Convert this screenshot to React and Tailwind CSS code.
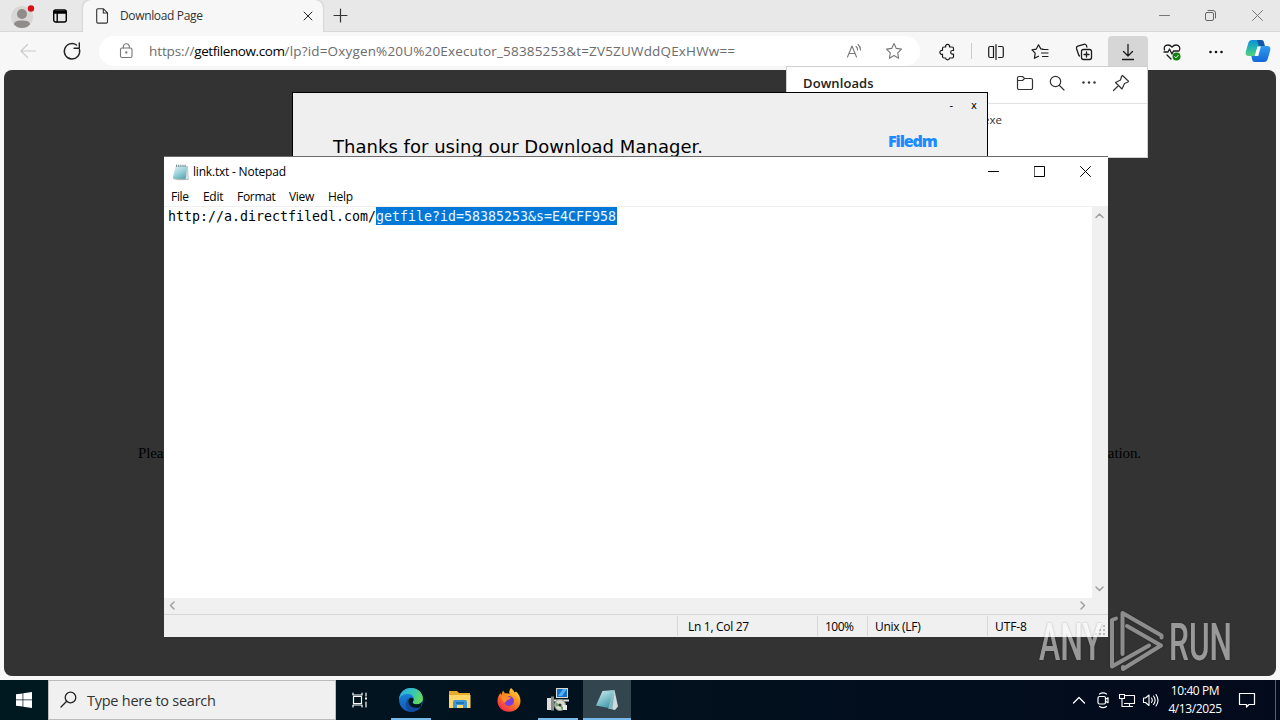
import React from "react";

const UI = "font-['Open_Sans','Noto_Sans',sans-serif]";

const Icon = ({ size = 20, stroke = "#1b1b1b", width = 1.2, className = "", children }) => (
  <svg
    width={size}
    height={size}
    viewBox={`0 0 ${size} ${size}`}
    fill="none"
    stroke={stroke}
    strokeWidth={width}
    strokeLinecap="round"
    strokeLinejoin="round"
    className={`shrink-0 ${className}`}
  >
    {children}
  </svg>
);

const NotepadIcon = ({ size }) => (
  <svg width={size} height={size} viewBox="0 0 24 24" className="shrink-0">
    <defs>
      <linearGradient id="np" x1="0" y1="0" x2="0.6" y2="1">
        <stop offset="0" stopColor="#e3f4f6" />
        <stop offset="0.5" stopColor="#a5d6de" />
        <stop offset="1" stopColor="#5fadb9" />
      </linearGradient>
    </defs>
    <path d="M6 3 L22.500 3 L23.500 22.500 L10 23 L2 21.500 Z" fill="#b5b8b4" />
    <path d="M5 3 L21.500 3 L19.500 21.500 L1 20.500 Z" fill="url(#np)" />
    <path d="M21.500 3 L22.500 21 L19.500 21.500 Z" fill="#dfe5e5" />
    <path d="M6.500 1v3M9.500 1v3M12.500 1v3M15.500 1v3M18.500 1v3" stroke="#4a6468" strokeWidth="1.200" />
  </svg>
);

const TabStrip = () => (
  <div className="flex h-8 shrink-0 bg-[#e8e8e8]">
    <div className="flex w-[83px] items-center border-b border-[#d8d8d8] pl-[10px]">
      <svg width="26" height="28" viewBox="0 0 26 28">
        <circle cx="12" cy="15" r="11" fill="#d9d7d5" />
        <circle cx="12" cy="12" r="5" fill="#8f8c89" />
        <path d="M4 22.500C4 19 8 18.500 12 18.500s8 .5 8 4C18 25 15 26 12 26s-6-1-8-3.500z" fill="#8f8c89" />
        <circle cx="21" cy="6.500" r="3.200" fill="#d9101c" />
      </svg>
      <Icon size={16} stroke="#000" width={1.4} className="ml-4">
        <rect x="1.700" y="2" width="12.600" height="12" rx="2" />
        <path d="M2 3.500h12M2 5h12M5.200 5v9" />
      </Icon>
    </div>
    <div className="flex w-[240px] items-center rounded-t-lg bg-[#f7f7f7] pl-[11px] shadow-[0_0_2px_#aaa]">
      <Icon size={16} stroke="#333" width={1.1}>
        <path d="M4 .8h5.500l4 4v9a1.300 1.300 0 0 1-1.300 1.300H4a1.300 1.300 0 0 1-1.300-1.300v-11.700A1.300 1.300 0 0 1 4 .8zM9.300 1v4h4" />
      </Icon>
      <span className="ml-[10px] flex-1 text-[12px] tracking-[-0.35px] text-[#333]">Download Page</span>
      <Icon size={10} stroke="#222" width={1} className="mr-[10px]">
        <path d="M1 1l8 8M9 1l-8 8" />
      </Icon>
    </div>
    <div className="flex flex-1 items-center border-b border-[#d8d8d8] pl-[10px]">
      <Icon size={15} stroke="#333">
        <path d="M7.500 1v13M1 7.500h13" />
      </Icon>
      <div className="ml-auto flex items-center pr-[17px]">
        <Icon size={11} stroke="#777" width={1}>
          <path d="M.5 5.500h10" />
        </Icon>
        <Icon size={11} stroke="#666" width={1} className="mr-9 ml-[35px]">
          <rect x=".5" y="2.500" width="8" height="8" rx="1.500" />
          <path d="M3 .5h5a2.500 2.500 0 0 1 2.500 2.500v5" />
        </Icon>
        <Icon size={11} stroke="#777" width={1}>
          <path d="M.5.5l10 10M10.500.5l-10 10" />
        </Icon>
      </div>
    </div>
  </div>
);

const ToolButton = ({ active, children }) => (
  <div className={`flex h-[31px] w-10 shrink-0 items-center justify-center rounded-t ${active ? "bg-[#d6d6d6]" : ""}`}>
    {children}
  </div>
);

const Toolbar = () => (
  <div className="flex h-[38px] shrink-0 bg-[#f7f7f7] pt-1">
    <div className="flex h-[30px] w-[99px] items-center">
      <Icon size={18} stroke="#c9c9c9" className="ml-[19px]">
        <path d="M16.500 9H2M8.500 2.500L2 9l6.500 6.500" />
      </Icon>
      <Icon size={20} stroke="#222" width={1.400} className="ml-[25px]">
        <path d="M17.500 8.500A7.700 7.700 0 1 1 14.500 4M17.300 2v5.200h-5.200" />
      </Icon>
    </div>
    <div className="flex h-[30px] w-[821px] items-center rounded-full bg-white pl-[20px]">
      <Icon size={16} stroke="#777" width={1.100} className="-mt-px">
        <rect x="1.500" y="5" width="11.500" height="9.500" rx="1.500" />
        <path d="M4.300 5V3.800a3 3 0 0 1 6 0V5" />
        <circle cx="7.300" cy="9.500" r=".6" fill="#777" />
      </Icon>
      <div className="ml-[14px] flex-1 text-[13.5px] whitespace-nowrap text-[#6c6c6c]">
        <span className="tracking-[-0.1px]">https://</span>
        <span className="tracking-[-0.42px] text-black">getfilenow.com</span>
        <span className="tracking-[0.17px]">/lp?id=Oxygen%20U%20Executor_58385253&amp;t=ZV5ZUWddQExHWw==</span>
      </div>
      <Icon size={18} stroke="#777" width={1.100}>
        <path d="M2.500 15L7 4l4.500 11M4 11.500h6M11 4.500a4 4 0 0 1 1.500 3.500M13 2.500a7 7 0 0 1 2.500 5.500" />
      </Icon>
      <Icon size={18} stroke="#777" width={1.100} className="mr-[17px] ml-[22px]">
        <path d="M9 1.500l2.300 4.900 5.200.7-3.800 3.700.9 5.400L9 13.600l-4.600 2.600.9-5.400L1.500 7.100l5.200-.7z" />
      </Icon>
    </div>
    <div className="ml-[7px] flex gap-1">
      <ToolButton>
        <Icon size={18} width={1.200}>
          <path d="M6 4h1.700a2 2 0 1 1 3.800 0h2.500a1.500 1.500 0 0 1 1.500 1.500v2h-1a1.800 1.800 0 0 0 0 3.600h1v2.400a1.500 1.500 0 0 1-1.500 1.500h-2.500a1.900 1.900 0 0 1-3.800 0H6a1.500 1.500 0 0 1-1.500-1.500v-2.300a2 2 0 1 1 0-3.800V5.500A1.500 1.500 0 0 1 6 4z" />
        </Icon>
      </ToolButton>
      <div className="mt-[7px] h-4 w-px bg-[#ccc]" />
      <ToolButton>
        <Icon size={18} width={1.200}>
          <path d="M6.500 3.500H3.200A1.500 1.500 0 0 0 1.700 5v8a1.500 1.500 0 0 0 1.500 1.500h3.300zM9 1.500v15M11.500 3.500h3.300A1.500 1.500 0 0 1 16.300 5v8a1.500 1.500 0 0 1-1.500 1.500h-3.300" />
        </Icon>
      </ToolButton>
      <ToolButton>
        <Icon size={18} width={1.200}>
          <path d="M12 6.200l-2.200-.3L7.500 1.800 5.300 6.100l-4.300.7 3.200 3.300-.8 5.200 4.100-2.100M11.500 6.500h5.500M10.500 10h6.500M11.500 13.500h5.500" />
        </Icon>
      </ToolButton>
      <ToolButton>
        <Icon size={18} width={1.300}>
          <rect x="6.500" y="6.500" width="10" height="10" rx="2" />
          <path d="M11.500 9v5M9 11.500h5M4.500 13L3.700 12 1.500 5.500a2 2 0 0 1 1.200-2.400L9 1.300a2 2 0 0 1 2.500 1.400l.4 1.500" />
        </Icon>
      </ToolButton>
      <ToolButton active>
        <Icon size={18} width={1.300}>
          <path d="M9 1.500v11.500M4.500 8.500L9 13l4.500-4.500M3.500 16.500h11" />
        </Icon>
      </ToolButton>
      <ToolButton>
        <Icon size={18} width={1.300}>
          <path d="M1.500 7C.5 4 2 2 5 2c2 0 3 1 4 2.200C10 3 11 2 13 2c3 0 4.500 2.500 3.500 5M1 9h4l1.500-3L9 11l1.500-3h5.500M4 12l4 4" />
          <circle cx="13.500" cy="13.500" r="4" fill="#138012" stroke="none" />
          <path d="M11.700 13.700l1.200 1.200 2.300-2.500" stroke="#fff" strokeWidth="1" />
        </Icon>
      </ToolButton>
      <ToolButton>
        <Icon size={16}>
          <g fill="#111" stroke="none">
            <circle cx="2.500" cy="8" r="1.300" />
            <circle cx="8" cy="8" r="1.300" />
            <circle cx="13.500" cy="8" r="1.300" />
          </g>
        </Icon>
      </ToolButton>
    </div>
    <svg width="26" height="24" viewBox="0 0 26 24" className="mt-[3px] ml-[9px]">
      <defs>
        <linearGradient id="cpA" x1="0" y1="0" x2="0" y2="1">
          <stop offset="0" stopColor="#0d8fd8" />
          <stop offset="0.5" stopColor="#22b7b0" />
          <stop offset="1" stopColor="#5bd07a" />
        </linearGradient>
        <linearGradient id="cpB" x1="0" y1="0" x2="0" y2="1">
          <stop offset="0" stopColor="#2f9df0" />
          <stop offset="1" stopColor="#1467d8" />
        </linearGradient>
      </defs>
      <path d="M7 1h9c2 0 2.500 1 3 3l.8 3h-3c-2 0-2.700 1-3.300 3l-1.600 5c-.5 1.500-1.500 2-3 2H4c-3 0-4-2-3-5l2.300-8C4 2 5 1 7 1z" fill="url(#cpA)" />
      <path d="M12 1h4c2 0 2.500 1 3 3l.8 3h-6z" fill="#1557a8" />
      <path d="M19 23h-9c-2 0-2.500-1-3-3l-.6-3H9c2 0 2.700-1 3.300-3l1.600-5c.5-1.500 1.500-2 3-2H22c3 0 4 2 3 5l-2.300 8C22 22 21 23 19 23z" fill="url(#cpB)" />
      <path d="M14.500 8.500l-2 7.500h-1.500l2.200-7.500z" fill="#fff" stroke="#fff" strokeWidth="2" />
    </svg>
  </div>
);

const DownloadsPopup = () => (
  <div className="absolute top-[66px] left-[786px] h-[92px] w-[362px] border border-[#d0d0d0] bg-white">
    <div className="flex h-[37px] items-center border-b border-[#e2e2e2] pl-4">
      <span className="flex-1 pb-[3px] text-[13px] font-semibold tracking-[0.1px] text-[#222]">Downloads</span>
      <div className="flex gap-[14px] pr-[17px] pb-[5px]">
        <Icon size={18} stroke="#333">
          <path d="M1.500 4A1.500 1.500 0 0 1 3 2.500h3.500L8.500 4.500h6.500A1.500 1.500 0 0 1 16.500 6v8a1.500 1.500 0 0 1-1.500 1.500H3A1.500 1.500 0 0 1 1.500 14zM1.500 6.500h5l2-2" />
        </Icon>
        <Icon size={18} stroke="#333">
          <circle cx="7.500" cy="7.500" r="5.200" />
          <path d="M11.500 11.500l4.500 4.500" />
        </Icon>
        <Icon size={18}>
          <g fill="#333" stroke="none">
            <circle cx="3.500" cy="8.500" r="1.200" />
            <circle cx="9" cy="8.500" r="1.200" />
            <circle cx="14.500" cy="8.500" r="1.200" />
          </g>
        </Icon>
        <Icon size={18} stroke="#333">
          <path d="M10.500 1.500l6 5.800-1 1-3 1.200-2.500 5.500L3.500 8.500 8.500 6l1-3.500zM6.500 11.500l-5 5" />
        </Icon>
      </div>
    </div>
    <div className="pt-[7px] pl-[196px] text-[11.5px] text-[#333]">exe</div>
  </div>
);

const DownloadManager = () => (
  <div className="absolute top-[92px] left-[292px] flex h-[90px] w-[696px] justify-between border border-black bg-[#efefef]">
    <h1 className="mt-[42px] ml-10 font-['DejaVu_Sans',sans-serif] text-[18px] leading-6 tracking-[0.03px] whitespace-nowrap text-black">
      Thanks for using our Download Manager.
    </h1>
    <div className="w-[100px]">
      <div className="mt-[5px] flex justify-end gap-[18px] pr-[10px] font-['DejaVu_Sans',sans-serif] text-[10px] leading-4 text-black">
        <span>-</span>
        <span>x</span>
      </div>
      <div className="mt-[15px] ml-px font-['Open_Sans',sans-serif] text-[16px] leading-6 font-extrabold tracking-[-1.1px] text-[#1a8cff]">
        Filedm
      </div>
    </div>
  </div>
);

const Notepad = () => (
  <div className="absolute top-[156px] left-[164px] flex h-[481px] w-[944px] flex-col border-t border-[#6b6b6b] bg-white text-[12px] text-black">
    <div className="flex h-[30px] shrink-0 items-center pl-2">
      <NotepadIcon size={17} />
      <span className="ml-1 text-[12px] tracking-[-0.2px]">link.txt - Notepad</span>
      <div className="ml-auto flex gap-[35px] pr-[17px] pb-[2px]">
        <Icon size={11} stroke="#000" width={1}>
          <path d="M.5 5.500h10" />
        </Icon>
        <Icon size={11} stroke="#000" width={1}>
          <path d="M.5.5h10v10H.5z" />
        </Icon>
        <Icon size={11} stroke="#000" width={1}>
          <path d="M.5.5l10 10M10.500.5l-10 10" />
        </Icon>
      </div>
    </div>
    <div className="flex h-5 shrink-0 items-center gap-[14px] border-b border-[#efefef] pl-[7px] tracking-[-0.3px]">
      <span className="w-[18px]">File</span>
      <span className="w-[20px]">Edit</span>
      <span className="w-[38px]">Format</span>
      <span className="w-[25px]">View</span>
      <span>Help</span>
    </div>
    <div className="flex min-h-0 flex-1">
      <div className="flex flex-1 items-start pl-1 font-['DejaVu_Sans_Mono',monospace] text-[13.29px] leading-[18px] whitespace-nowrap">
        <span className="w-[208px] pt-px">http://a.directfiledl.com/</span>
        <span className="h-[18px] bg-[#0078d7] pr-px leading-5 text-[#e8f6ff]">getfile?id=58385253&amp;s=E4CFF958</span>
      </div>
      <div className="flex w-4 flex-col items-center justify-between bg-[#f0f0f0] pt-1 pr-[2px] pb-[5px]">
        <Icon size={9} stroke="#a0a0a0" width={1.500}>
          <path d="M1 6.500l3.500-3.500L8 6.500" />
        </Icon>
        <Icon size={9} stroke="#a0a0a0" width={1.500}>
          <path d="M1 3l3.500 3.500L8 3" />
        </Icon>
      </div>
    </div>
    <div className="flex h-4 shrink-0 items-center justify-between bg-[#f0f0f0] pr-[21px] pb-[2px] pl-1">
      <Icon size={9} stroke="#a0a0a0" width={1.500}>
        <path d="M6 1L2.500 4.500 6 8" />
      </Icon>
      <Icon size={9} stroke="#a0a0a0" width={1.500}>
        <path d="M3 1l3.500 3.500L3 8" />
      </Icon>
    </div>
    <div className="flex h-[23px] shrink-0 items-center border-t border-[#d7d7d7] bg-[#f0f0f0] pl-[513px] tracking-[-0.3px]">
      <span className="h-[20px] w-[140px] border-l border-[#d7d7d7] pt-[2px] pl-[10px]">Ln 1, Col 27</span>
      <span className="h-[20px] w-[50px] border-l border-[#d7d7d7] pt-[2px] pl-[7px] tracking-[-0.5px]">100%</span>
      <span className="h-[20px] w-[120px] border-l border-[#d7d7d7] pt-[2px] pl-[7px]">Unix (LF)</span>
      <span className="h-[20px] flex-1 border-l border-[#d7d7d7] pt-[2px] pl-[7px] tracking-[-0.1px]">UTF-8</span>
      <div className="mt-2 grid grid-cols-3 gap-[2px] pr-[3px]">
        <i className="col-start-3 size-[2px] bg-[#bbb]" />
        <i className="col-start-2 size-[2px] bg-[#bbb]" />
        <i className="size-[2px] bg-[#bbb]" />
        <i className="size-[2px] bg-[#bbb]" />
        <i className="size-[2px] bg-[#bbb]" />
        <i className="size-[2px] bg-[#bbb]" />
      </div>
    </div>
  </div>
);

const TaskButton = ({ open, active, children }) => (
  <div className={`flex h-10 w-12 flex-col items-center ${active ? "bg-[#33454e]" : ""}`}>
    <div className="flex flex-1 items-center pt-[2px]">{children}</div>
    <div className={`h-[2px] ${active ? "w-12" : "w-10"} ${open ? "bg-[#76b9ed]" : ""}`} />
  </div>
);

const Taskbar = () => (
  <div className="flex h-10 shrink-0 bg-linear-to-r from-[#001820] to-[#030a1c]">
    <div className="flex w-12 items-center justify-center">
      <svg width="16" height="16" viewBox="0 0 16 16" fill="#fff">
        <path d="M0 2.300L6.600 1.400v6.200H0zM7.300 1.300L16 0v7.600H7.300zM0 8.300h6.600v6.300L0 13.700zM7.300 8.300H16V16l-8.700-1.300z" />
      </svg>
    </div>
    <div className="flex w-[288px] items-center border border-[#bcbcbc] bg-[#f0f0f0] pl-[11px]">
      <Icon size={18} stroke="#222" width={1.300}>
        <circle cx="10.500" cy="6.500" r="5.300" />
        <path d="M6.700 10.300L1 16" />
      </Icon>
      <span className="ml-[9px] pt-px text-[14.5px] tracking-[-0.25px] text-[#333]">Type here to search</span>
    </div>
    <div className="mr-[3px] flex w-12 items-center justify-center">
      <Icon size={18} stroke="#fff" width={1.200}>
        <path d="M2 2v2h9V2M2 16v-2h9v2M2.500 5.500h8v7h-8zM15 2v3M15 11v5" />
        <rect x="14" y="6.500" width="2" height="2" fill="#fff" stroke="none" />
      </Icon>
    </div>
    <div className="flex gap-px">
      <TaskButton open>
        <svg width="26" height="26" viewBox="0 0 24 24">
          <defs>
            <linearGradient id="edA" x1="0" y1="0" x2="1" y2="0.4">
              <stop offset="0" stopColor="#2aa5e8" />
              <stop offset="0.6" stopColor="#35c7b4" />
              <stop offset="1" stopColor="#62d860" />
            </linearGradient>
            <linearGradient id="edB" x1="0" y1="0" x2="0" y2="1">
              <stop offset="0" stopColor="#1b8ee0" />
              <stop offset="1" stopColor="#1557b0" />
            </linearGradient>
          </defs>
          <circle cx="12" cy="12" r="11" fill="url(#edB)" />
          <path d="M1 11.500C1.500 5 6 1 12 1c7 0 11 5 11 9.500 0 3.500-2.500 5.500-5.500 5.500-2.500 0-4-1-4-1.800 0-.7 1.200-1.200 1.200-3.200C14.700 8 12 6.500 9 6.500c-4 0-7 2-8 5z" fill="url(#edA)" />
          <path d="M9.500 10C7.500 15 11 20.500 19.500 19.500 17 22 14 23.300 11 23 6.500 20.500 6 14 9.500 10z" fill="#124a9c" />
          <path d="M13.500 14.200c0 .8 1.500 1.800 4 1.800 2 0 4-1 5-2.800l-1.500 5c-4 2.500-11.500 1-11.500-5 0-1.500.7-2.700 1.700-3.200 1.300-.5 3 .2 3.200 1.400 0 1.500-.9 2-.9 2.800z" fill="#001820" />
        </svg>
      </TaskButton>
      <TaskButton>
        <svg width="24" height="22" viewBox="0 0 24 22">
          <path d="M1 2h8l2 2h11v15H1z" fill="#e9a92b" />
          <path d="M1 6h21.500v13H1z" fill="#ffd667" />
          <path d="M5 19v-6a2 2 0 0 1 2-2h10a2 2 0 0 1 2 2v6h-4v-3H9v3z" fill="#3d97d8" />
          <path d="M8 13h8v2H8z" fill="#1f74b8" />
        </svg>
      </TaskButton>
      <TaskButton>
        <svg width="24" height="24" viewBox="0 0 24 24">
          <defs>
            <linearGradient id="ff" x1="0.9" y1="0" x2="0.2" y2="1">
              <stop offset="0" stopColor="#ffe23a" />
              <stop offset="0.45" stopColor="#ff8a1e" />
              <stop offset="1" stopColor="#f0244f" />
            </linearGradient>
          </defs>
          <path d="M14 0c2 1.500 3 3 3.500 4.500L19 3.500c2.500 2 4.500 5.500 4.500 9.500 0 6-5 10.800-11.500 10.800S.5 19 .5 13c0-3 1-6 3-8l.8 2L6 2.500l2 3c2-.5 3.500 0 4.500.5C12 4 12.500 1.500 14 0z" fill="url(#ff)" />
          <circle cx="12" cy="13" r="5" fill="#7a3fd8" />
          <path d="M4.500 8c2-1.500 5-1 6.500.5 1 .8 2 .8 3 1-.5 1.500-2.500 2-3.500 2.500C9 13 8.500 14 8 15c-2-1-4-4-3.500-7z" fill="#ff8b22" />
        </svg>
      </TaskButton>
      <TaskButton open>
        <svg width="24" height="26" viewBox="0 0 24 26">
          <rect x="10.500" y="1.500" width="11" height="9" fill="#1670cf" stroke="#dcdcd0" />
          <path d="M12 9l5-7h4l-5 7z" fill="#4fb2f4" />
          <path d="M8 12.500h15v2H8z" fill="#e4e2d8" />
          <path d="M1 11h4v12H1z" fill="#dedede" />
          <path d="M5 9.500h3v14H5z" fill="#8a8a8a" />
          <circle cx="14" cy="18" r="5.500" fill="#d4dccb" stroke="#8c9488" />
          <path d="M14 18l-4.500-3v5zM14 18l4.500 3-3 2z" fill="#6fa36c" />
          <circle cx="14" cy="18" r="1.500" fill="#333" />
          <path d="M17 18h4v5h-4z" fill="#e9e9e9" />
        </svg>
      </TaskButton>
      <TaskButton open active>
        <svg width="24" height="24" viewBox="0 0 24 24">
          <defs>
            <linearGradient id="npT" x1="0" y1="0" x2="0.6" y2="1">
              <stop offset="0" stopColor="#d9f1f5" />
              <stop offset="1" stopColor="#3f9aaa" />
            </linearGradient>
          </defs>
          <path d="M7.500 3l12-1-3.500 18.500L1 17.500z" fill="url(#npT)" />
          <path d="M19.500 2L23 18.500l-3 3.500-6.500-1.500z" fill="#cfdadb" />
          <path d="M19.500 3.500L17.500 21l-4-.5z" fill="#82b4be" />
        </svg>
      </TaskButton>
    </div>
    <div className="ml-auto flex items-center">
      <div className="flex items-center gap-[6px]">
        <Icon size={18} stroke="#fff" width={1.300}>
          <path d="M3.500 12L9 6.500l5.500 5.500" />
        </Icon>
        <Icon size={18} stroke="#fff" width={1.200}>
          <rect x="4" y="5.500" width="7.500" height="7.500" rx="1.500" />
          <path d="M11.500 8.200l2.500-1.500v5l-2.500-1.500M5.500 3c2-1.300 5-1.300 7 0M5.500 15.500c2 1.300 5 1.300 7 0" />
        </Icon>
        <Icon size={18} stroke="#fff" width={1.100}>
          <path d="M6.500 4.500h10v8h-10M9 15.500h5.500M11.500 12.500v3M1.500 3.500h5v4h-5zM4 7.500v8h4.500" />
        </Icon>
        <Icon size={18} stroke="#fff" width={1.100}>
          <path d="M1.500 7v4.500h2L7 14.500V4L3.500 7zM9.500 7a4 4 0 0 1 0 4.500M11.500 5a7 7 0 0 1 0 8.500M14 3.500a10 10 0 0 1 0 11.500" />
        </Icon>
      </div>
      <div className="ml-[5px] flex w-[60px] flex-col items-center text-[12px] leading-[18px] tracking-[-0.4px] text-white">
        <span>10:40 PM</span>
        <span>4/13/2025</span>
      </div>
      <Icon size={18} stroke="#fff" width={1.200} className="ml-[13px]">
        <path d="M1.500 2.500h15v11h-5.500L8.500 16v-2.500h-7z" />
      </Icon>
      <div className="ml-[19px] h-10 w-[5px] border-l border-[#56606c]" />
    </div>
  </div>
);

const Watermark = () => (
  <svg
    width="204"
    height="84"
    viewBox="0 0 204 84"
    className="absolute top-[598px] left-[1036px] overflow-visible opacity-50 drop-shadow-[0_0_1px_rgba(0,0,0,0.45)]"
  >
    <g fill="#fff" fontFamily="Roboto, sans-serif" fontSize="52" fontWeight="500">
      <text x="3" y="62" textLength="63" lengthAdjust="spacingAndGlyphs">
        ANY
      </text>
      <text x="133" y="62" textLength="63" lengthAdjust="spacingAndGlyphs">
        RUN
      </text>
    </g>
    <g fill="none" stroke="#e6e6e6" strokeWidth="4" strokeLinecap="round" strokeLinejoin="round">
      <path d="M80 20.500l-4 1.500v46.500l37-21" />
      <path d="M86.500 56V15l39 22.500v2" />
      <path d="M91 28l34 19.500L87 71v-2" />
    </g>
  </svg>
);

export default function App() {
  return (
    <div className={`relative flex h-[720px] w-[1280px] flex-col overflow-hidden bg-[#f7f7f7] ${UI}`}>
      <TabStrip />
      <Toolbar />
      <div className="mx-1 mb-1 flex flex-1 items-center rounded-lg bg-[#333] pt-[161px] pr-[135px] pl-[134px]">
        <p className="flex h-0 flex-1 items-center justify-between font-['Liberation_Serif',serif] text-[15px] tracking-[-0.1px] text-black">
          <span>Please</span>
          <span>installation.</span>
        </p>
      </div>
      <Taskbar />
      <DownloadsPopup />
      <DownloadManager />
      <Notepad />
      <Watermark />
    </div>
  );
}
